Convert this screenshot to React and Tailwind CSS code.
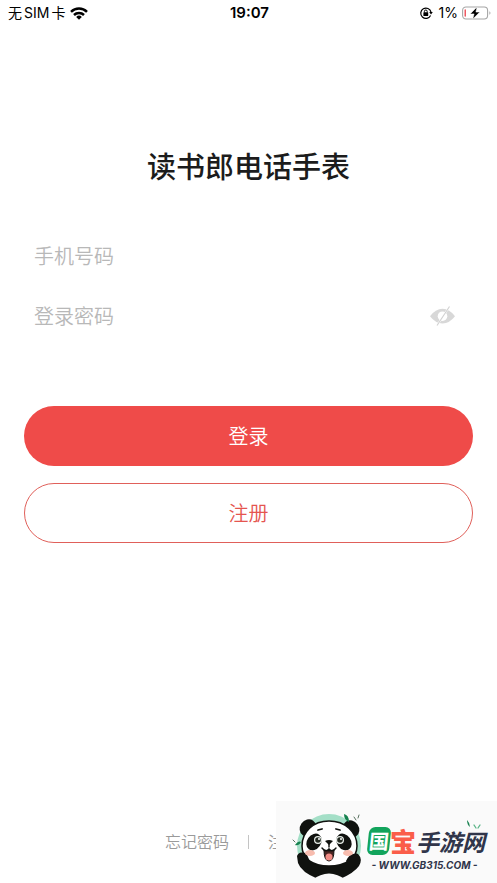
import React, { useState } from "react";

export default function App() {
  return (
    <div className="relative flex min-h-screen flex-col overflow-hidden bg-white font-['Inter','Noto_Sans_CJK_SC',sans-serif]">
      <StatusBar />
      <LoginForm />
      <Footer />
      <SiteBadge />
    </div>
  );
}

function StatusBar() {
  return (
    <header className="grid h-[26px] grid-cols-3 items-center pr-1.5 pl-2 text-sm leading-5 text-black">
      <div className="flex items-center gap-[5px]">
        <div className="flex gap-0.5 whitespace-nowrap">
          <span>无</span>
          <span>SIM</span>
          <span>卡</span>
        </div>
        <WifiIcon />
      </div>
      <time className="text-center text-[15px] font-semibold">19:07</time>
      <div className="flex items-center justify-end gap-1">
        <RotationLockIcon />
        <span className="pl-0.5">1%</span>
        <BatteryIcon />
      </div>
    </header>
  );
}

function LoginForm() {
  const [visible, setVisible] = useState(false);

  return (
    <main className="px-6 pt-[122px]">
      <h1 className="text-center text-[29px] leading-10 font-medium text-[#1c1c1c]">
        读书郎电话手表
      </h1>

      <form className="mt-[38px]" onSubmit={(e) => e.preventDefault()}>
        <div className="flex h-[60px] items-center px-2.5">
          <input
            type="tel"
            aria-label="手机号码"
            placeholder="手机号码"
            className="w-full pt-0.5 text-xl leading-8 font-[350] outline-none placeholder:text-[#b8b8b8]"
          />
        </div>
        <div className="flex h-[60px] items-center pr-[17px] pl-2.5">
          <input
            type={visible ? "text" : "password"}
            aria-label="登录密码"
            placeholder="登录密码"
            className="min-w-0 flex-1 pt-0.5 text-xl leading-8 font-[350] outline-none placeholder:text-[#b8b8b8]"
          />
          <button
            type="button"
            aria-label="显示密码"
            onClick={() => setVisible(!visible)}
          >
            <EyeOffIcon />
          </button>
        </div>

        {/* Actions */}
        <div className="mt-[60px] flex flex-col gap-[17px]">
          <button
            type="submit"
            className="h-[60px] rounded-full bg-[#ef4b49] pt-0.5 text-xl leading-8 font-[350] text-white"
          >
            登录
          </button>
          <button
            type="button"
            className="h-[60px] rounded-full border border-[#e0605a] pt-0.5 text-xl leading-8 font-[350] text-[#e5554f]"
          >
            注册
          </button>
        </div>
      </form>
    </main>
  );
}

function Footer() {
  return (
    <footer className="mt-auto flex items-center justify-center gap-[19px] pb-[29px] text-base leading-6 font-[350] text-[#9a9a9a]">
      <a href="#forgot">忘记密码</a>
      <span className="h-3.5 w-px bg-[#c4c4c4]" />
      <a href="#register">注册账号</a>
    </footer>
  );
}

// Site badge pinned over the bottom right corner
function SiteBadge() {
  return (
    <aside className="absolute right-0 bottom-0 flex h-[82px] w-[221px] items-center bg-[#fafafa] pt-2 pl-4">
      <PandaIcon />
      <div className="relative flex flex-col items-center pt-1.5 pl-1">
        <div className="flex items-center font-['Noto_Sans_CJK_SC',sans-serif] text-[23px] leading-8 font-bold">
          <span className="flex h-7 w-[22px] -skew-x-6 items-center justify-center rounded-md bg-[#12a45c] text-xl text-white">
            国
          </span>
          <span className="text-[26px] font-black text-[#fa5d49]">宝</span>
          <span className="text-[#30354a] italic">手游网</span>
        </div>
        <p className="pr-1 text-[10px] leading-4 font-bold whitespace-nowrap text-[#30354a] italic">
          - WWW.GB315.COM -
        </p>
        <svg width="16" height="12" viewBox="0 0 16 12" className="absolute top-0 right-1" aria-hidden="true">
          <path d="M2 1Q5 4 5 8Q2 6 2 1Z" fill="#16824f" />
          <path d="m9 6 2 3M15 6l-2 3" stroke="#58b486" strokeWidth="1.3" strokeLinecap="round" />
        </svg>
      </div>
    </aside>
  );
}

//
// Icons
//
function WifiIcon() {
  return (
    <svg width="18" height="13" viewBox="0 0 18 13" fill="none" stroke="#000" strokeWidth="2.5" aria-hidden="true">
      <path d="M1 4.8a11.5 11.5 0 0 1 16 0" />
      <path d="M4 8a7.2 7.2 0 0 1 10 0" />
      <path d="M9 12.7 6.2 9.9a4 4 0 0 1 5.6 0Z" fill="#000" stroke="none" />
    </svg>
  );
}

function RotationLockIcon() {
  return (
    <svg width="14" height="14" viewBox="0 0 14 14" fill="none" stroke="#000" strokeWidth="1.2" aria-hidden="true">
      <path d="M11.6 9.6A5.2 5.2 0 1 1 12 6" />
      <path d="m10.2 6 3.6 0-1.8 2.5Z" fill="#000" stroke="none" />
      <rect x="4.4" y="6.2" width="4.8" height="3.8" rx=".6" fill="#000" stroke="none" />
      <path d="M5.4 6.5V5.4a1.4 1.4 0 0 1 2.8 0v1.1" strokeWidth="1" />
    </svg>
  );
}

function BatteryIcon() {
  return (
    <svg width="29" height="14" viewBox="0 0 29 14" fill="none" aria-hidden="true">
      <rect x=".6" y="1" width="25" height="12" rx="3.4" stroke="#a6a6a6" strokeWidth="1.1" />
      <rect x="2.5" y="3.2" width="1.5" height="7.6" rx=".7" fill="#ee5962" />
      <path d="M27.4 5.2v3.6c1.4-.6 1.4-3 0-3.6Z" fill="#a6a6a6" />
      <path d="M15 1 8.2 7.9h3.9L10.8 13 17.8 6.1h-3.9Z" fill="#000" stroke="#fff" strokeWidth=".5" />
    </svg>
  );
}

function EyeOffIcon() {
  return (
    <svg width="27" height="22" viewBox="0 0 27 22" fill="none" aria-hidden="true">
      <path d="M1 11.3Q6.5 3.8 13.5 3.8T26 11.3Q20.5 18.5 13.5 18.5T1 11.3Z" fill="#d8d8d8" />
      <circle cx="13.5" cy="11.2" r="4.8" fill="#fff" />
      <path d="M20.5 1.5 8 20.5" stroke="#fff" strokeWidth="1.8" />
      <path d="M20.5 1.5 8 20.5" stroke="#d0d0d0" strokeWidth="1.1" />
    </svg>
  );
}

function PandaIcon() {
  return (
    <svg width="72" height="68" viewBox="0 0 72 68" className="shrink-0" aria-hidden="true">
      <circle cx="37" cy="34" r="32" fill="#a4dfc7" />
      <path d="M18 60h39l-9 8H27Z" fill="#fafafa" />
      <ellipse cx="16" cy="16" rx="8" ry="9" transform="rotate(35 16 16)" fill="#10120f" />
      <ellipse cx="59" cy="17" rx="8" ry="9" transform="rotate(-35 59 17)" fill="#10120f" />
      <path d="M5 44q2-5 7-3l8 9h34l2-5q4-6 10-3 5 5 1 12-5 7-19 13H26Q9 60 6 51Z" fill="#10120f" />
      <path d="M37 9c16 0 28 11 28 25 0 13-12 20-28 20S10 47 10 34C10 20 21 9 37 9Z" fill="#fff" stroke="#10120f" strokeWidth="1.5" />
      <path d="M6 43q7-6 10 2l4 10-9 2q-5-5-5-14ZM54 49q5-10 12-6 4 5-1 11l-7 3Z" fill="#10120f" />
      <ellipse cx="22" cy="30" rx="7" ry="9" transform="rotate(35 22 30)" fill="#10120f" />
      <ellipse cx="52" cy="30" rx="7" ry="9" transform="rotate(-35 52 30)" fill="#10120f" />
      <circle cx="26" cy="28" r="4" fill="#e8eee9" />
      <circle cx="48" cy="28" r="4" fill="#e8eee9" />
      <circle cx="26" cy="28" r="2.8" fill="#222820" />
      <circle cx="48" cy="28" r="2.8" fill="#222820" />
      <circle cx="27" cy="27" r="1" fill="#fff" />
      <circle cx="49" cy="27" r="1" fill="#fff" />
      <path d="m26 18 4-1M44 17l4 1" stroke="#10120f" strokeWidth="1.8" strokeLinecap="round" />
      <ellipse cx="18" cy="41" rx="5" ry="3" fill="#f7bcae" />
      <ellipse cx="56" cy="41" rx="5" ry="3" fill="#f7bcae" />
      <path d="M33 29q4-2 8 0l-4 4Z" fill="#10120f" />
      <path d="M32 38q5 2 10 0 0 11-5 11t-5-11Z" fill="#4b2522" stroke="#10120f" />
      <ellipse cx="37" cy="45" rx="3.5" ry="3.5" fill="#f08c85" />
      <path d="M37 32v3m-7 1q4 5 7 1 3 4 7-1" fill="none" stroke="#10120f" strokeWidth="1.4" strokeLinecap="round" />
      <path d="M20 68q17-13 34 0Z" fill="#fafafa" />
      <path d="M52 2q5 1 5 8-5-2-5-8ZM3 33q3-5 6-3-2 4-6 3Z" fill="#16824f" />
      <path d="m62 5 2 3M67 3l-1 3M1 28l2 2" stroke="#58715f" strokeLinecap="round" />
    </svg>
  );
}
